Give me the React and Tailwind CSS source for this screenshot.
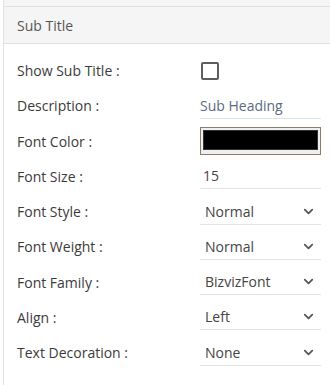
import { ChevronDown } from 'lucide-react';

const fontStack = { fontFamily: '"Open Sans", "Liberation Sans", sans-serif' };

function Row({ label, children }) {
  return (
    <div className="flex h-[35.25px] items-center pl-[13px]">
      <div className="w-[183px] text-[14px] text-[#3b3b3b]">{label}</div>
      <div className="w-[121px]">{children}</div>
    </div>
  );
}

function TextValue({ value, className = '' }) {
  return (
    <div className={`flex h-[26px] items-center border-b border-[#e3e3e3] text-[14px] ${className}`}>
      {value}
    </div>
  );
}

function SelectValue({ value }) {
  return (
    <div className="flex h-[26px] items-center justify-between border-b border-[#e3e3e3] pl-[5px] pr-[5px] text-[14px] text-[#444]">
      <span>{value}</span>
      <ChevronDown size={15} strokeWidth={2.8} className="text-[#555]" />
    </div>
  );
}

export default function App() {
  return (
    <div className="h-[385px] w-[330px] bg-white" style={fontStack}>
      <div className="ml-[3px] h-full border-l border-[#e2e2e2]">
        <div className="h-[7px] border-b border-[#e0e0e0] bg-[#f5f5f5]" />
        <div className="flex h-[37px] items-center border-b border-[#e0e0e0] bg-[#f5f5f5] pl-[13px] text-[14px] text-[#555]">
          Sub Title
        </div>
        <div className="pt-[9px]">
          <Row label="Show Sub Title :">
            <div className="ml-[1px] h-[18px] w-[18px] rounded-[2px] border-2 border-[#5e5e5e]" />
          </Row>
          <Row label="Description :">
            <TextValue value="Sub Heading" className="text-[#5b6b80]" />
          </Row>
          <Row label="Font Color :">
            <div className="h-[28px] border border-[#8d7a6a] bg-[#efefef] px-[2px] pb-[4px] pt-[2px]">
              <div className="h-full border border-[#333] bg-black" />
            </div>
          </Row>
          <Row label="Font Size :">
            <TextValue value="15" className="pl-[3px] text-[#444]" />
          </Row>
          <Row label="Font Style :">
            <SelectValue value="Normal" />
          </Row>
          <Row label="Font Weight :">
            <SelectValue value="Normal" />
          </Row>
          <Row label="Font Family :">
            <SelectValue value="BizvizFont" />
          </Row>
          <Row label="Align :">
            <SelectValue value="Left" />
          </Row>
          <Row label="Text Decoration :">
            <SelectValue value="None" />
          </Row>
        </div>
      </div>
    </div>
  );
}
